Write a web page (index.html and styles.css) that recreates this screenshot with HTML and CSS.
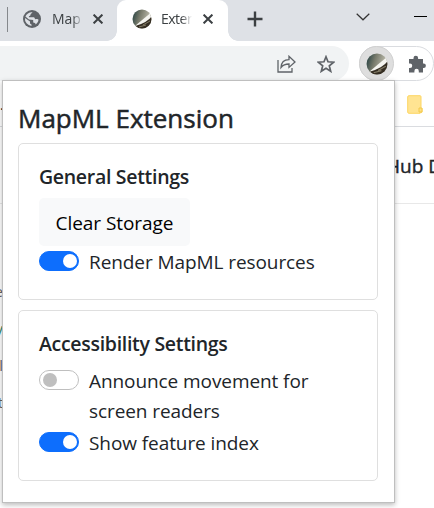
FILE: index.html
```html
<!DOCTYPE html>
<html lang="en">
<head>
<meta charset="utf-8">
<title>MapML Extension</title>
<link rel="stylesheet" href="styles.css">
</head>
<body>
<header class="tabs">
  <span class="divider"></span>
  <svg class="globe" width="18" height="18" viewBox="0 0 18 18"><circle cx="9" cy="9" r="9" fill="#5f6368"/><path d="M2 8l5 3.500v2l1.500 1v1.400A7 7 0 0 1 2 8zM9.500 2.200c-.5 1.500-2 1.100-2 2.600 0 1.700-1.800.5-1.600 2.400h4.800c1.200 0 .8 2 2 2 1 0 2.200-.4 2.800.6-.2 2-1.500 3.800-2.800 4.600-.2-2-1.300-1.600-2.500-2V10L6 9.600 2.400 6.500C3.600 3.500 6.500 1.900 9.500 2.200z" fill="#dee1e6"/></svg>
  <span class="tab-name first">Map</span>
  <svg class="close" width="10" height="10" viewBox="0 0 10 10"><path d="M.6.6l8.800 8.800M9.400.6L.6 9.400"/></svg>
  <div class="active-tab">
    <svg class="orb" width="20" height="20" viewBox="0 0 20 20"><use href="#logo"/></svg>
    <span class="tab-name">Exter</span>
    <svg class="close" width="10" height="10" viewBox="0 0 10 10"><path d="M.6.6l8.800 8.800M9.400.6L.6 9.400"/></svg>
  </div>
  <svg class="plus" width="16" height="16" viewBox="0 0 16 16"><path d="M8 .5v15M.5 8h15"/></svg>
  <svg class="chevron" width="14" height="8" viewBox="0 0 14 8"><path d="M.7.7L7 6.800 13.300.7"/></svg>
  <span class="minimize"></span>
</header>
<nav class="toolbar">
  <div class="address">
    <svg width="19" height="18" viewBox="0 0 19 18"><path d="M1 5v12h14v-4M4 12.500c.3-5 3-7.800 8-7.800V1.300L18 7l-6 5.400V9c-3.800 0-6 .9-8 3.500z"/></svg>
    <svg width="18" height="18" viewBox="0 0 18 18"><path d="M9 1.800l2 5 5.600.4-4.300 3.600 1.400 5.500L9 13.300l-4.700 3 1.400-5.500L1.400 7.200 7 6.800z" stroke-width="1.700"/></svg>
  </div>
  <div class="extensions">
    <span class="selected"><svg width="22" height="22" viewBox="0 0 20 20"><defs><clipPath id="round"><circle cx="10" cy="10" r="9.500"/></clipPath><linearGradient id="sky" x2="1" y2=".3"><stop stop-color="#16363a"/><stop offset=".45" stop-color="#777a6b"/><stop offset="1" stop-color="#c6c4b5"/></linearGradient></defs><g id="logo" clip-path="url(#round)"><path fill="url(#sky)" d="M0 0h20v20H0z"/><path d="M2 18Q12 13 20 5v15H2z" fill="#342d22"/><path d="M3 17Q10 11 18 4.500L20 7Q15 14 3 17z" fill="#f4f4ef"/><path d="M11 16l7-4M7 18l7-2" stroke="#827b65"/></g></svg></span>
    <svg class="puzzle" width="18" height="18" viewBox="0 0 18 18"><path d="M1 4h4.500V3a2.300 2.300 0 0 1 4.600 0v1H15v4.500h.6a2.300 2.300 0 0 1 0 4.600H15v4.400h-4.200V16a2.200 2.200 0 0 0-4.400 0v1.500H1V13h1a2.200 2.200 0 0 0 0-4.500H1z"/></svg>
  </div>
</nav>
<div class="bookmarks"><span>.</span><svg width="16" height="19" viewBox="0 0 16 19"><path d="M2 .7h11q1 0 1 1v11l1 1v3q0 1-1 1h-1v.6H2q-1.300 0-1.300-1.200V2Q.7.700 2 .7z" fill="#ffe492" stroke="#fdd663"/><path d="M12 13h3v4h-3z" fill="#ffe082" stroke="#f2c94c"/></svg></div>
<div class="site-head"><span>Hub D</span></div>
<main class="page"><span>e</span><span class="green">y</span><span>ol</span><span>t</span></main>

<section class="popup">
  <h1>MapML Extension</h1>
  <div class="card general">
    <h2>General Settings</h2>
    <button>Clear Storage</button>
    <label><i class="switch on"></i><span>Render MapML resources</span></label>
  </div>
  <div class="card access">
    <h2>Accessibility Settings</h2>
    <label><i class="switch"></i><span>Announce movement for<br>screen readers</span></label>
    <label><i class="switch on"></i><span>Show feature index</span></label>
  </div>
</section>
</body>
</html>
```
FILE: styles.css
```css
* { box-sizing: border-box; }
body { margin: 0; width: 434px; height: 508px; overflow: hidden; position: relative; background: #fff; color: #212529; font-family: "Open Sans", "Noto Sans", sans-serif; }
svg { display: block; flex: none; }
.tabs { height: 41px; display: flex; align-items: center; background: #dee1e6; padding-bottom: 3px; }
.divider { width: 1px; height: 25px; background: #85888c; margin: 1px 15px 0 7px; }
.tab-name { width: 31px; overflow: hidden; white-space: nowrap; font-size: 14px; color: #3c4043; line-height: 20px; -webkit-mask-image: linear-gradient(90deg, #000 65%, transparent 100%); mask-image: linear-gradient(90deg, #000 65%, transparent 100%); }
.first { margin-left: 11px; }
.close { fill: none; stroke: #3c4043; stroke-width: 2; }
.tabs > .close { margin-left: 10px; }
.active-tab { width: 111px; height: 41px; margin: 0 0 -3px 14px; padding: 0 0 3px 15px; display: flex; align-items: center; background: #fff; border-radius: 9px 9px 0 0; position: relative; }
.active-tab::before, .active-tab::after { content: ""; position: absolute; bottom: 0; width: 10px; height: 10px; }
.active-tab::before { left: -10px; background: radial-gradient(circle at 0 0, transparent 9.5px, #fff 10px); }
.active-tab::after { right: -10px; background: radial-gradient(circle at 100% 0, transparent 9.5px, #fff 10px); }
.active-tab .tab-name { margin: 0 11px 0 9px; letter-spacing: -.5px; }
.plus { fill: none; stroke: #3c4043; stroke-width: 2.4; margin-left: 19px; }
.chevron { fill: none; stroke: #333; stroke-width: 1.2; margin: -5px 0 0 93px; }
.minimize { width: 13px; height: 1px; background: #000; margin: -6px 0 0 44px; }
.toolbar { height: 47px; display: flex; padding-top: 5px; }
.address { width: 349px; height: 35px; background: #f1f3f4; border-radius: 0 18px 18px 0; display: flex; justify-content: flex-end; align-items: center; gap: 21px; padding-right: 14px; }
.address svg { fill: none; stroke: #5f6368; stroke-width: 1.3; }
.extensions { width: 75px; height: 35px; margin-left: 10px; border: 1px solid #dadce0; border-radius: 18px; display: flex; align-items: center; }
.selected { width: 35px; height: 35px; margin-left: -1px; background: #dedede; border: 1px solid #d0d0d0; border-radius: 50%; display: grid; place-items: center; }
.puzzle { fill: #5f6368; margin-left: 14px; }
.bookmarks { height: 39px; border-bottom: 1px solid #dadce0; display: flex; justify-content: space-between; padding: 7px 11px 0 0; font-size: 14px; }
.site-head { height: 77px; border-bottom: 1px solid #e8e8e8; padding: 25px 0 0 386px; font-size: 19px; line-height: 28px; white-space: nowrap; overflow: hidden; -webkit-text-stroke: .4px #212529; }
.page { display: flex; flex-direction: column; align-items: flex-end; padding-top: 69px; width: 6px; margin-left: -3px; color: #666; font-size: 15px; line-height: 37px; }
.green { color: #268566; }
.popup { position: absolute; left: 2px; top: 80px; width: 393px; height: 423px; background: #fff; border: 1px solid #bfbfbf; box-shadow: 0 2px 5px #0004; padding: 18px 15px; }
h1, h2 { margin: 0; white-space: nowrap; }
h1 { font-size: 26px; line-height: 38px; height: 44px; font-weight: 400; letter-spacing: 0; -webkit-text-stroke: .5px #212529; }
.card { border: 1px solid #dfdfdf; border-radius: 5px; padding: 20px; width: 360px; }
.general { height: 157px; margin-bottom: 10px; }
.access { height: 171px; }
h2 { font-size: 19.5px; line-height: 26px; height: 34px; font-weight: 600; letter-spacing: -.3px; }
button { display: block; width: 151px; height: 48px; margin: 0; padding: 0; border: 0; border-radius: 5px; background: #f8f9fa; color: #000; font: 19px/50px "Open Sans", "Noto Sans", sans-serif; letter-spacing: -.05px; }
label { display: flex; gap: 10px; font-size: 19px; line-height: 30px; letter-spacing: -.08px; white-space: nowrap; margin-bottom: 2px; }
label span { position: relative; top: 1px; }
.switch { width: 40px; height: 20px; border: 1px solid #bfbfbf; border-radius: 10px; margin-top: 5px; padding: 2px; flex: none; }
.switch::before { content: ""; display: block; width: 14px; height: 14px; border-radius: 50%; background: #bfbfbf; margin-left: 1px; }
.on { background: #0d6efd; border-color: #0d6efd; }
.on::before { background: #fff; margin-left: 21px; }
```
